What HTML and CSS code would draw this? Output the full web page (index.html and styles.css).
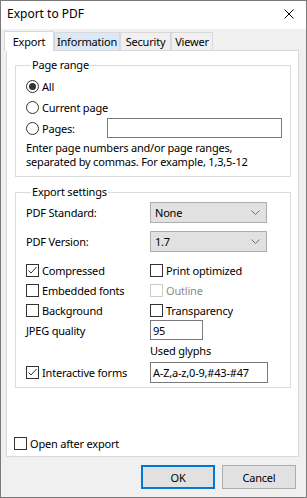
FILE: index.html
```html
<!DOCTYPE html>
<html lang="en">
<head>
    <meta charset="UTF-8">
    <title>Export to PDF</title>
    <link rel="stylesheet" href="styles.css">
</head>
<body>
    <div class="dialog">
        <div class="titlebar">
            <span class="title">Export to PDF</span>
            <svg class="close" width="10" height="10" viewBox="0 0 10 10">
                <path d="M0.5 0.5 L9.5 9.5 M9.5 0.5 L0.5 9.5" stroke="#000" stroke-width="1" fill="none"/>
            </svg>
        </div>

        <div class="tabs">
            <div class="tab active t-export">Export</div>
            <div class="tab hover t-info">Information</div>
            <div class="tab t-security">Security</div>
            <div class="tab t-viewer">Viewer</div>
        </div>

        <div class="panel">
            <fieldset class="group range">
                <legend>Page range</legend>
                <label class="row radio-row first-radio">
                    <span class="radio checked"></span>All
                </label>
                <label class="row radio-row">
                    <span class="radio"></span>Current page
                </label>
                <div class="row radio-row">
                    <label class="pages-label"><span class="radio"></span>Pages:</label>
                    <div class="textbox pages-box"></div>
                </div>
                <div class="hint">
                    <div class="hint-line">Enter page numbers and/or page ranges,</div>
                    <div class="hint-line">separated by commas. For example, 1,3,5-12</div>
                </div>
            </fieldset>

            <fieldset class="group settings">
                <legend>Export settings</legend>
                <div class="row r-std">
                    <span class="col1">PDF Standard:</span>
                    <div class="select"><span>None</span><svg width="9" height="5" viewBox="0 0 9 5"><path d="M0.5 0.5 L4.5 4.5 L8.5 0.5" stroke="#707070" fill="none"/></svg></div>
                </div>
                <div class="row r-ver">
                    <span class="col1">PDF Version:</span>
                    <div class="select"><span>1.7</span><svg width="9" height="5" viewBox="0 0 9 5"><path d="M0.5 0.5 L4.5 4.5 L8.5 0.5" stroke="#707070" fill="none"/></svg></div>
                </div>
                <div class="row r-check first">
                    <label class="col1"><span class="check on"></span>Compressed</label>
                    <label><span class="check"></span>Print optimized</label>
                </div>
                <div class="row r-check">
                    <label class="col1"><span class="check"></span>Embedded fonts</label>
                    <label class="disabled"><span class="check"></span>Outline</label>
                </div>
                <div class="row r-check">
                    <label class="col1"><span class="check"></span>Background</label>
                    <label><span class="check"></span>Transparency</label>
                </div>
                <div class="row r-jpeg">
                    <span class="col1">JPEG quality</span>
                    <div class="textbox jpeg-box">95</div>
                </div>
                <div class="row r-used">
                    <span class="col1"></span>
                    <span>Used glyphs</span>
                </div>
                <div class="row r-forms">
                    <label class="col1"><span class="check on"></span>Interactive forms</label>
                    <div class="textbox glyph-box">A-Z,a-z,0-9,#43-#47</div>
                </div>
            </fieldset>

            <label class="open-after"><span class="check"></span>Open after export</label>
        </div>

        <div class="actions">
            <button class="btn default">OK</button>
            <button class="btn">Cancel</button>
        </div>
    </div>
</body>
</html>
```

FILE: styles.css
```css
* {
    box-sizing: border-box;
}

body {
    margin: 0;
    font-family: "Noto Sans", sans-serif;
    font-size: 11px;
    letter-spacing: -0.2px;
    color: #000;
    background: #fff;
}

.dialog {
    width: 307px;
    height: 498px;
    border: 1px solid #7a7a7a;
    background: #f0f0f0;
    display: flex;
    flex-direction: column;
}

.titlebar {
    height: 28px;
    flex-shrink: 0;
    background: #fff;
    display: flex;
    align-items: center;
    justify-content: space-between;
    padding: 0 12px 3px 6px;
    font-size: 12px;
    letter-spacing: 0;
}

.close {
    display: block;
}

/* tabs */

.tabs {
    display: flex;
    align-items: flex-end;
    height: 21px;
    flex-shrink: 0;
    padding-left: 3px;
}

.tab {
    height: 18px;
    border: 1px solid #d9d9d9;
    border-bottom: none;
    display: flex;
    align-items: center;
    justify-content: center;
    background: #f0f0f0;
}

.tab.hover {
    background: #d8eaf9;
}

.tab.active {
    height: 20px;
    background: #fff;
    margin-bottom: -1px;
    position: relative;
    z-index: 1;
    padding-bottom: 1px;
}

.t-export { width: 50px; }
.t-info { width: 66px; }
.t-security { width: 51px; }
.t-viewer { width: 42px; }

.panel {
    height: 407px;
    flex-shrink: 0;
    margin: 0 7px 0 5px;
    background: #fff;
    border: 1px solid #d9d9d9;
    display: flex;
    flex-direction: column;
}

/* group boxes */

.group {
    margin: 0 7px 0 8px;
    padding: 0 0 0 10px;
    border: 1px solid #dcdcdc;
    min-width: 0;
}

.group legend {
    margin-left: 5px;
    padding: 0 1px;
    line-height: 14px;
}

.range {
    margin-top: 7px;
    height: 119px;
}

.settings {
    margin-top: 8px;
    height: 203px;
}

.row {
    display: flex;
    align-items: center;
}

.radio-row {
    height: 20px;
    margin-top: 1px;
}

.radio-row.first-radio {
    margin-top: 4px;
}

.pages-label {
    display: flex;
    align-items: center;
    width: 81px;
}

.radio {
    width: 13px;
    height: 13px;
    border: 1px solid #333;
    border-radius: 50%;
    margin-right: 3px;
    display: flex;
    align-items: center;
    justify-content: center;
    background: #fff;
}

.radio.checked::after {
    content: "";
    width: 7px;
    height: 7px;
    border-radius: 50%;
    background: #333;
}

.textbox {
    border: 1px solid #7a7a7a;
    background: #fff;
    height: 20px;
    display: flex;
    align-items: center;
    padding-left: 2px;
}

.pages-box {
    width: 175px;
}

.hint {
    margin-top: 3px;
    white-space: nowrap;
}

.hint-line {
    height: 14px;
    line-height: 14px;
}

.col1 {
    width: 124px;
    flex-shrink: 0;
    display: flex;
    align-items: center;
}

.select {
    width: 117px;
    height: 21px;
    background: #e1e1e1;
    border: 1px solid #adadad;
    display: flex;
    align-items: center;
    justify-content: space-between;
    padding: 0 6px 0 4px;
}

.r-std {
    margin-top: 3px;
    height: 21px;
}

.r-ver {
    margin-top: 8px;
    height: 20px;
}

.r-check {
    height: 20px;
}

.r-check.first {
    margin-top: 9px;
}

.r-check label,
.r-forms label {
    display: flex;
    align-items: center;
}

.check {
    width: 13px;
    height: 13px;
    border: 1px solid #333;
    background: #fff;
    margin-right: 3px;
    flex-shrink: 0;
}

.check.on {
    background: #fff url("data:image/svg+xml,%3Csvg xmlns='http://www.w3.org/2000/svg' width='11' height='11'%3E%3Cpath d='M1.5 5.5 L4 8 L9.5 2' stroke='%23333' fill='none'/%3E%3C/svg%3E") no-repeat center;
}

.disabled {
    color: #8d8d8d;
}

.disabled .check {
    border-color: #cccccc;
}

.r-jpeg {
    height: 20px;
}

.jpeg-box {
    width: 53px;
}

.r-used {
    height: 21px;
}

.r-forms {
    height: 22px;
}

.glyph-box {
    width: 118px;
    height: 21px;
}

.open-after {
    margin: auto 0 3px 7px;
    display: flex;
    align-items: center;
    height: 20px;
}

/* buttons */

.actions {
    display: flex;
    justify-content: flex-end;
    gap: 7px;
    padding: 8px 10px 0 0;
}

.btn {
    width: 74px;
    height: 24px;
    font-family: "Noto Sans", sans-serif;
    font-size: 11px;
    letter-spacing: -0.2px;
    background: #e1e1e1;
    border: 1px solid #adadad;
    padding: 0;
}

.btn.default {
    border: 2px solid #0078d7;
}
```
